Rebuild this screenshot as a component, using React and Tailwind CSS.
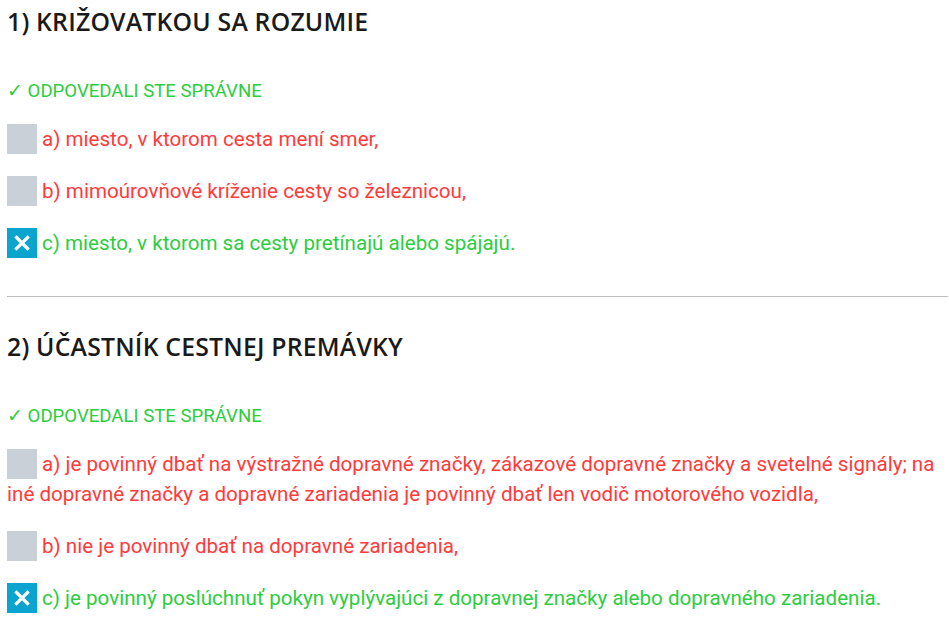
const questions = [
  {
    title: '1) KRIŽOVATKOU SA ROZUMIE',
    answers: [
      { text: 'a) miesto, v ktorom cesta mení smer,', correct: false },
      { text: 'b) mimoúrovňové kríženie cesty so železnicou,', correct: false },
      { text: 'c) miesto, v ktorom sa cesty pretínajú alebo spájajú.', correct: true },
    ],
  },
  {
    title: '2) ÚČASTNÍK CESTNEJ PREMÁVKY',
    answers: [
      {
        text: 'a) je povinný dbať na výstražné dopravné značky, zákazové dopravné značky a svetelné signály; na iné dopravné značky a dopravné zariadenia je povinný dbať len vodič motorového vozidla,',
        correct: false,
      },
      { text: 'b) nie je povinný dbať na dopravné zariadenia,', correct: false },
      {
        text: 'c) je povinný poslúchnuť pokyn vyplývajúci z dopravnej značky alebo dopravného zariadenia.',
        correct: true,
      },
    ],
  },
]

function Box({ checked }) {
  if (!checked) {
    return <span className="mr-[5px] inline-block h-[30px] w-[30px] align-top bg-[#c9d0d8]" />
  }
  return (
    <span className="mr-[5px] inline-flex h-[30px] w-[30px] items-center justify-center align-top bg-[#0aa4cf]">
      <svg width="16" height="16" viewBox="0 0 16 16" aria-hidden="true">
        <path d="M2.5 2.5 L13.5 13.5 M13.5 2.5 L2.5 13.5" stroke="#fff" strokeWidth="3.2" strokeLinecap="square" />
      </svg>
    </span>
  )
}

function Question({ q }) {
  return (
    <section>
      <h2 className="font-['Open_Sans',sans-serif] text-[24.8px] font-semibold leading-[42px] tracking-[0.2px] text-[#1a1a1a]">
        {q.title}
      </h2>
      <p className="mt-[34px] font-['Roboto',sans-serif] text-[18.6px] leading-[30px] text-[#2ecc40]">
        ✓ ODPOVEDALI STE SPRÁVNE
      </p>
      <ul className="mt-[18px] flex flex-col gap-[22px]">
        {q.answers.map((a) => (
          <li
            key={a.text}
            className={`font-['Roboto',sans-serif] text-[20.6px] leading-[30px] ${a.correct ? 'text-[#2ecc40]' : 'text-[#ff3b3b]'}`}
          >
            <Box checked={a.correct} />
            {a.text}
          </li>
        ))}
      </ul>
    </section>
  )
}

export default function App() {
  return (
    <div className="min-h-screen bg-white pl-[7px] pr-[1px]">
      <Question q={questions[0]} />
      <hr className="mt-[38px] mb-[28px] border-0 border-t border-[#bdbdbd]" />
      <Question q={questions[1]} />
    </div>
  )
}
